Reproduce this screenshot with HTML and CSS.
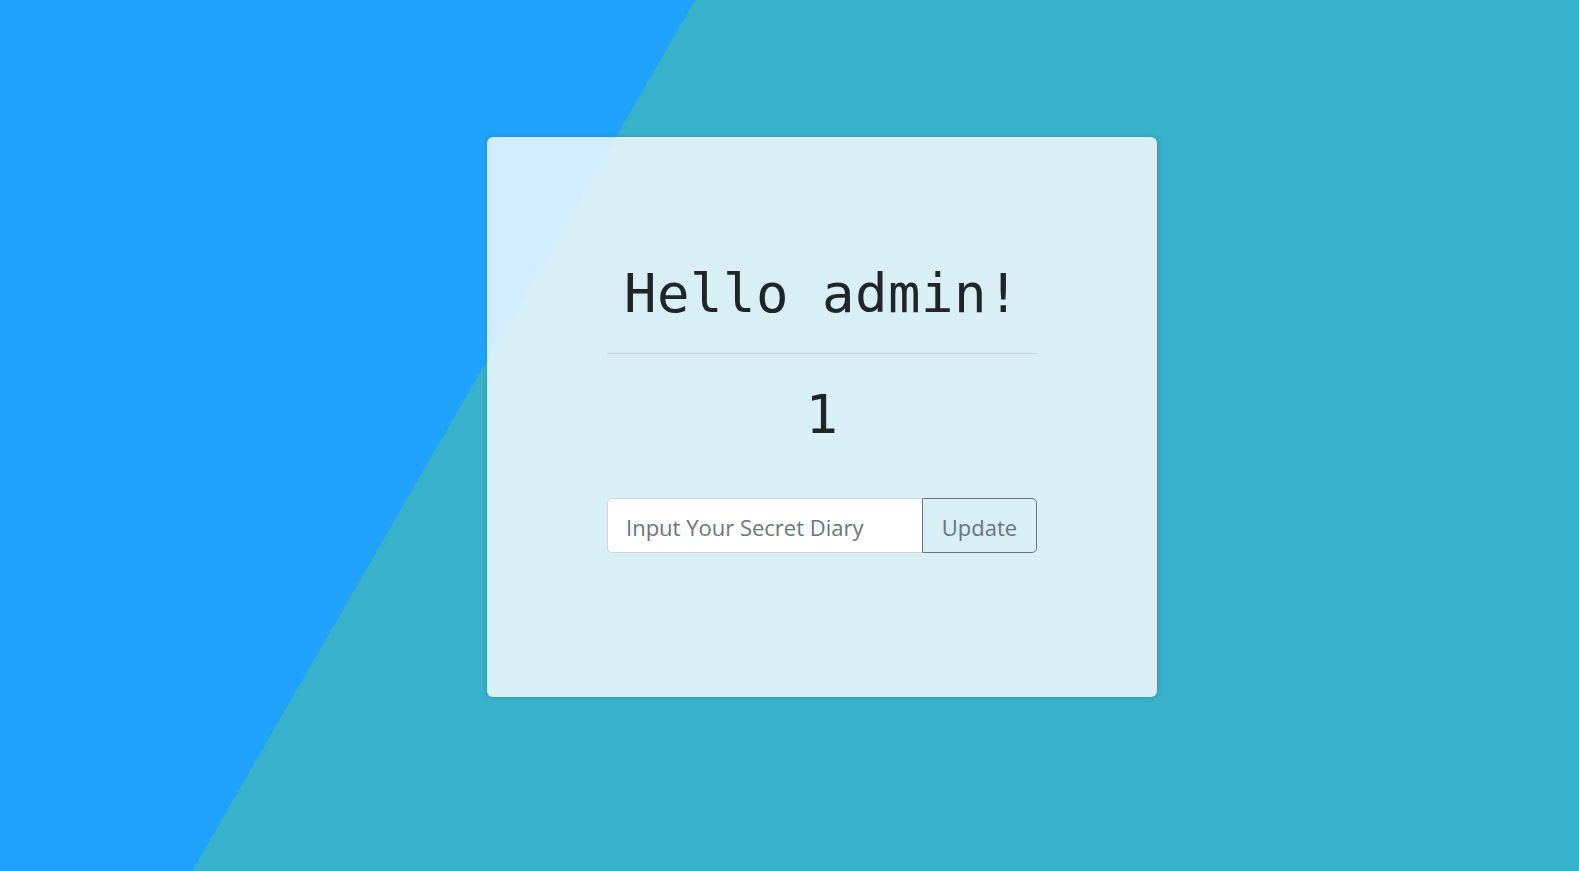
FILE: index.html
```html
<!DOCTYPE html>
<html lang="en">
<head>
<meta charset="utf-8">
<title>Secret Diary</title>
<link rel="stylesheet" href="styles.css">
</head>
<body>
  <main class="card">
    <h1 class="greeting">Hello admin!</h1>
    <hr class="divider">
    <div class="count">1</div>
    <form class="diary-form" onsubmit="return false">
      <input class="diary-input" type="text" placeholder="Input Your Secret Diary">
      <button class="diary-button" type="submit">Update</button>
    </form>
  </main>
</body>
</html>
```
FILE: styles.css
```css
html, body {
  margin: 0;
  height: 100%;
}

body {
  background: linear-gradient(120deg, #1fa3ff 602px, #38b1ca 602px);
  font-family: "Open Sans", "Noto Sans", sans-serif;
  color: #212529;
  padding-top: 137px;
  box-sizing: border-box;
  overflow: hidden;
}

.card {
  box-sizing: border-box;
  width: 670px;
  height: 560px;
  margin-left: 487px;
  background: rgba(255, 255, 255, 0.8);
  border-radius: 6px;
  box-shadow: 0 0 5px rgba(0, 0, 0, 0.18);
  padding: 125px 120px 0;
  display: flex;
  flex-direction: column;
}

.greeting,
.count {
  font-family: "DejaVu Sans Mono", monospace;
  font-weight: 400;
  font-size: 54px;
  line-height: 1.2;
  text-align: center;
  margin: 0;
  letter-spacing: 0.5px;
}

.divider {
  border: 0;
  border-top: 1px solid rgba(0, 0, 0, 0.1);
  margin: 26px 0 29px;
  width: 100%;
}

.diary-form {
  display: flex;
  margin-top: 50px;
  height: 55px;
}

.diary-input {
  flex: 1;
  min-width: 0;
  box-sizing: border-box;
  height: 55px;
  border: 1px solid #ced4da;
  border-right: 0;
  border-radius: 5px 0 0 5px;
  background: #fff;
  padding: 4px 18px 0;
  font-family: "Open Sans", "Noto Sans", sans-serif;
  font-size: 22px;
  color: #495057;
  outline: none;
}

.diary-input::placeholder {
  color: #6c757d;
  opacity: 1;
}

.diary-button {
  box-sizing: border-box;
  width: 115px;
  height: 55px;
  border: 1px solid #6c757d;
  border-radius: 0 5px 5px 0;
  background: transparent;
  color: #6c757d;
  font-family: "Open Sans", "Noto Sans", sans-serif;
  font-size: 22px;
  padding: 4px 0 0;
  text-align: center;
  cursor: pointer;
}
```
